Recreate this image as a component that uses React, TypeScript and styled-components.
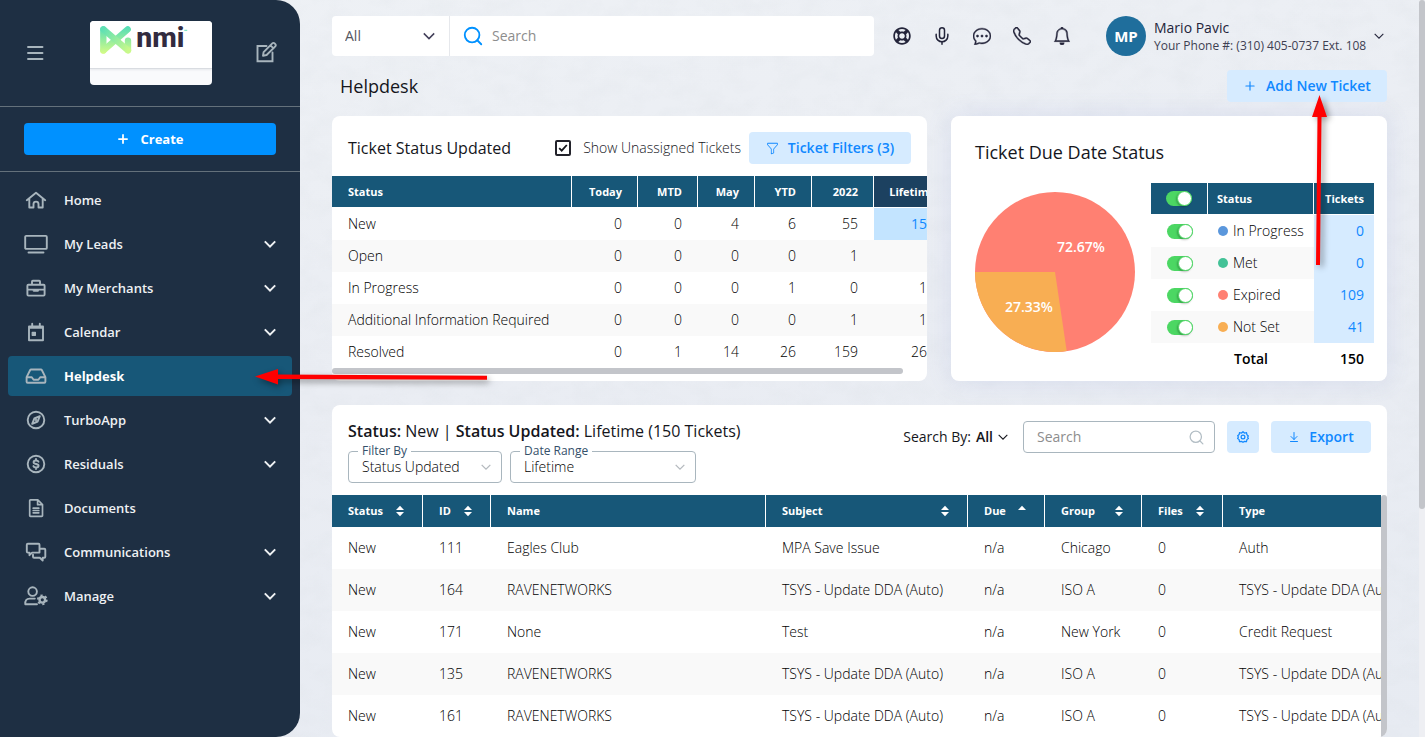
import React from "react";
import styled, { createGlobalStyle, css } from "styled-components";
import { ArrowDownToLine, Mic, Plus, Search } from "lucide-react";
import { BsBell, BsChatDots, BsFunnel, BsTelephone } from "react-icons/bs";
import { FaRegLifeRing } from "react-icons/fa";

const color = {
  navy: "#1e2f43",
  teal: "#175778",
  blue: "#0091ff",
  link: "#1088ff",
  pale: "#d6ebff",
  text: "#15161c",
  line: "#a9b6be",
  stripe: "#f9f9f9",
};

const GlobalStyle = createGlobalStyle`
  *, *::before, *::after { box-sizing: border-box; }
  body { margin: 0; background: #eaedf3; color: ${color.text}; font-family: "Open Sans", "Noto Sans", sans-serif; font-size: 14px; line-height: 20px; }
  button, input, select { font: inherit; color: inherit; margin: 0; }
  button { cursor: pointer; border: 0; padding: 0; background: none; }
  a { color: inherit; text-decoration: none; }
  h1, h2, p { margin: 0; font-weight: 400; }
  svg { display: block; flex: none; }
`;

/* ---------- shell ---------- */

const Page = styled.div`
  position: relative;
  display: flex;
  height: 100vh;
  overflow: hidden;
  isolation: isolate;
  background: linear-gradient(170deg, #eef1f5 0%, #eaedf3 45%, #e7ebf2 100%);
`;

const Texture = styled.svg`
  position: absolute;
  inset: 0;
  z-index: -1;
  width: 100%;
  height: 100%;
`;

const Content = styled.main`
  flex: 1;
  min-width: 0;
  padding: 16px 32px 0;
  overflow-y: auto;
  scrollbar-width: none;
`;

const PageRail = styled.div`
  flex: none;
  width: 6px;
  background: #eeeff3;
  &::before {
    content: "";
    display: block;
    height: 69%;
    border-radius: 3px;
    background: #c3c5ca;
  }
`;

/* ---------- sidebar ---------- */

const Sidebar = styled.aside`
  position: relative;
  z-index: 2;
  flex: none;
  width: 300px;
  border-radius: 0 24px 24px 0;
  background: ${color.navy};
  color: #fff;
`;

const Brand = styled.header`
  display: flex;
  align-items: center;
  justify-content: space-between;
  height: 107px;
  padding: 0 22px 0 24px;
  border-bottom: 1px solid #64717b;
`;

const BrandCard = styled.div`
  width: 122px;
  height: 64px;
  overflow: hidden;
  border-radius: 4px;
  background: #f9fafc;
`;

const BrandMark = styled.svg`
  background: #fff;
  border-bottom: 1px solid #d9dce1;
  box-shadow: 0 1px 2px #e6e8ec;
`;

const CreateBar = styled.div`
  padding: 16px 24px;
  border-bottom: 1px solid #64717b;
`;

const CreateButton = styled.button`
  display: flex;
  align-items: center;
  justify-content: center;
  gap: 10px;
  width: 100%;
  height: 32px;
  border-radius: 4px;
  background: ${color.blue};
  color: #fff;
  font-size: 13px;
  font-weight: 700;
`;

const Nav = styled.nav`
  display: flex;
  flex-direction: column;
  gap: 4px;
  padding: 8px;
`;

const NavItem = styled.a<{ $active?: boolean }>`
  position: relative;
  display: flex;
  align-items: center;
  gap: 16px;
  height: 40px;
  padding: 0 16px;
  border-radius: 4px;
  background: ${(p) => (p.$active ? color.teal : "transparent")};
  color: ${(p) => (p.$active ? "#fff" : "#eef1f3")};
  font-size: 13px;
  font-weight: ${(p) => (p.$active ? 700 : 600)};
`;

const NavLabel = styled.span`
  flex: 1;
`;

const StrokeIcon = styled.svg`
  width: 24px;
  height: 24px;
  fill: none;
  stroke: #a8b5bd;
  stroke-width: 1.9;
  stroke-linejoin: round;
  stroke-linecap: round;
`;

const Chevron = ({ size = 12, width = 2 }: { size?: number; width?: number }) => (
  <svg width={size} height={size} viewBox="0 0 12 12" fill="none" stroke="currentColor" strokeWidth={width}>
    <path d="M.8 3.4 6 8.6l5.2-5.2" />
  </svg>
);

/* ---------- arrows ---------- */

const ArrowLeft = styled.svg`
  position: absolute;
  z-index: 5;
  left: 247px;
  top: 12px;
  filter: drop-shadow(2px 3px 3px rgba(0, 0, 0, 0.4));
  pointer-events: none;
`;

const ArrowUp = styled.svg`
  position: absolute;
  z-index: 5;
  left: 84px;
  top: 25px;
  filter: drop-shadow(3px 2px 3px rgba(0, 0, 0, 0.4));
  pointer-events: none;
`;

/* ---------- top bar ---------- */

const TopBar = styled.div`
  display: grid;
  grid-template-columns: minmax(0, 1fr) auto 281px;
  align-items: center;
  height: 40px;
  color: #23243a;
`;

const GlobalSearch = styled.div`
  display: flex;
  height: 40px;
  overflow: hidden;
  border-radius: 4px;
  background: #fff;
`;

const Scope = styled.div`
  position: relative;
  flex: none;
  width: 118px;
  border-right: 1px solid #e6e8ec;
  color: #55555e;
`;

const PlainSelect = styled.select`
  appearance: none;
  width: 100%;
  height: 100%;
  padding: 0 32px 0 13px;
  border: 0;
  outline: 0;
  border-radius: inherit;
  background: transparent;
`;

const SelectMark = styled.span<{ $tone: string; $right: number }>`
  position: absolute;
  right: ${(p) => p.$right}px;
  top: 50%;
  transform: translateY(-50%);
  color: ${(p) => p.$tone};
  pointer-events: none;
`;

const SearchLabel = styled.label`
  display: flex;
  flex: 1;
  align-items: center;
  gap: 8px;
  padding: 0 12px;
  color: ${color.blue};
`;

const SearchInput = styled.input`
  flex: 1;
  min-width: 0;
  padding: 0;
  border: 0;
  outline: 0;
  background: transparent;
  color: ${color.text};
  &::placeholder { color: #8d8d8d; opacity: 1; }
`;

const Tools = styled.div`
  display: flex;
  padding: 0 24px 0 8px;
`;

const ToolButton = styled.button`
  display: grid;
  place-items: center;
  width: 40px;
  height: 40px;
`;

const User = styled.button`
  display: flex;
  align-items: center;
  gap: 8px;
  padding-right: 3px;
  text-align: left;
`;

const Avatar = styled.span`
  display: grid;
  place-items: center;
  flex: none;
  width: 40px;
  height: 40px;
  border-radius: 50%;
  background: #1f6e9c;
  color: #fff;
  font-size: 15px;
  font-weight: 700;
`;

const UserText = styled.span`
  display: grid;
  flex: 1;
  padding-top: 2px;
  white-space: nowrap;
  line-height: 18px;
`;

const Phone = styled.small`
  color: #3e3f52;
  font-size: 12px;
`;

/* ---------- shared controls ---------- */

const PaleButton = styled.button<{ $width: number }>`
  position: relative;
  display: flex;
  flex: none;
  align-items: center;
  justify-content: center;
  gap: 9px;
  width: ${(p) => p.$width}px;
  height: 32px;
  border-radius: 4px;
  background: ${color.pale};
  color: ${color.link};
  font-weight: 600;
  white-space: nowrap;
`;

const TitleRow = styled.div`
  position: relative;
  z-index: 1;
  display: flex;
  align-items: center;
  justify-content: space-between;
  margin: 14px 0;
  padding-left: 8px;
`;

const PageTitle = styled.h1`
  font-size: 18px;
  line-height: 24px;
`;

const Card = styled.section`
  min-width: 0;
  overflow: hidden;
  border-radius: 8px;
  background: #fff;
`;

const DueCard = styled(Card)`
  padding: 24px 13px 6px 24px;
  box-shadow: 0 0 24px rgba(120, 135, 210, 0.16);
`;

const CardGrid = styled.div`
  display: grid;
  grid-template-columns: minmax(0, 1fr) 436px;
  gap: 24px;
  margin-bottom: 24px;
`;

const CardTitle = styled.h2<{ $size: number }>`
  font-size: ${(p) => p.$size}px;
  line-height: 24px;
`;

const StatusHeader = styled.div`
  display: flex;
  align-items: center;
  gap: 8px;
  height: 60px;
  padding: 4px 16px 0;
`;

const CheckLabel = styled.label`
  display: flex;
  align-items: center;
  gap: 12px;
  margin-left: auto;
  white-space: nowrap;
  font-weight: 300;
`;

const CheckFace = styled.span`
  display: grid;
  place-items: center;
  > * { grid-area: 1 / 1; }
  > svg { pointer-events: none; }
`;

const CheckBox = styled.input`
  appearance: none;
  width: 16px;
  height: 16px;
  border: 2px solid #23232b;
  border-radius: 2px;
`;

const Toggle = styled.input`
  appearance: none;
  display: block;
  width: 26px;
  height: 15px;
  margin: 0 auto;
  border-radius: 8px;
  background: #4cd763;
  &::before {
    content: "";
    display: block;
    width: 15px;
    height: 15px;
    margin-left: 11px;
    border: 1px solid #4cd763;
    border-radius: 50%;
    background: #fff;
    box-shadow: -1px 1px 2px rgba(0, 0, 0, 0.25);
  }
`;

/* ---------- tables ---------- */

const Clip = styled.div`
  flex: 1;
  min-width: 0;
  overflow: hidden;
`;

const Table = styled.table<{ $min: number }>`
  width: 100%;
  min-width: ${(p) => p.$min}px;
  table-layout: fixed;
  border-collapse: separate;
  border-spacing: 0;
  text-align: left;
`;

const Col = styled.col<{ $width?: number }>`
  ${(p) => p.$width && css`width: ${p.$width}px;`}
`;

const Th = styled.th<{ $end?: boolean; $dark?: boolean; $pad?: number; $last?: boolean }>`
  height: 32px;
  padding: 0 ${(p) => p.$pad ?? 16}px;
  border-right: ${(p) => (p.$last ? 0 : 1)}px solid #fff;
  background: ${(p) => (p.$dark ? "#1c4160" : color.teal)};
  background-clip: padding-box;
  color: #fff;
  font-size: 11px;
  font-weight: 700;
  text-align: ${(p) => (p.$end ? "right" : "left")};
  white-space: nowrap;
`;

const RuledTh = styled(Th)`
  border-bottom: 1px solid #fff;
`;

const Td = styled.td<{ $end?: boolean; $fill?: string; $pad?: number; $tall?: boolean }>`
  height: ${(p) => (p.$tall ? 42 : 32)}px;
  padding: 0 ${(p) => p.$pad ?? 16}px;
  background: ${(p) => p.$fill ?? "transparent"};
  color: ${(p) => (p.$fill ? color.link : "#000")};
  font-weight: ${(p) => (p.$fill ? 400 : 300)};
  text-align: ${(p) => (p.$end ? "right" : "left")};
  white-space: nowrap;
`;

const Row = styled.tr`
  &:nth-child(even) { background: ${color.stripe}; }
`;

const TotalCell = styled(Td)`
  font-weight: 600;
`;

const Indent = styled.span`
  margin-left: 16px;
`;

const Dot = styled.i<{ $color: string }>`
  display: inline-block;
  width: 10px;
  height: 10px;
  margin-right: 5px;
  border-radius: 50%;
  background: ${(p) => p.$color};
`;

const BottomRail = styled.div`
  height: 6px;
  margin-bottom: 7px;
  &::before {
    content: "";
    display: block;
    width: 96%;
    height: 6px;
    border-radius: 3px;
    background: #c3c5ca;
  }
`;

const SideRail = styled.div`
  flex: none;
  width: 6px;
  border-radius: 3px 3px 0 0;
  background: #c3c5ca;
`;

const DueBody = styled.div`
  display: grid;
  grid-template-columns: 160px 1fr;
  gap: 16px;
  margin-top: 19px;
`;

const Pie = styled.svg`
  margin-top: 9px;
  font-size: 14px;
  font-weight: 600;
`;

const ListHeader = styled.div`
  display: flex;
  justify-content: space-between;
  align-items: flex-start;
  height: 90px;
  padding: 14px 16px 12px;
`;

const ListHeading = styled.div`
  display: grid;
  gap: 8px;
`;

const Filters = styled.div`
  display: flex;
  gap: 8px;
`;

const Field = styled.div<{ $width: number }>`
  position: relative;
  width: ${(p) => p.$width}px;
  height: 32px;
  border: 1px solid ${color.line};
  border-radius: 4px;
  font-weight: 300;
  color: #000;
`;

const FieldLabel = styled.label`
  position: absolute;
  z-index: 1;
  left: 9px;
  top: -8px;
  padding: 0 4px;
  background: #fff;
  color: #35506a;
  font-size: 12px;
  font-weight: 500;
  line-height: 14px;
`;

const ListTools = styled.div`
  display: flex;
  align-items: center;
  gap: 12px;
  padding-top: 2px;
`;

const SearchBy = styled.button`
  display: flex;
  align-items: center;
  gap: 5px;
  padding-right: 3px;
  white-space: nowrap;
`;

const Strong = styled.b`
  font-weight: 600;
`;

const ListSearch = styled.label`
  display: flex;
  align-items: center;
  width: 192px;
  height: 32px;
  padding: 0 9px 0 13px;
  border: 1px solid ${color.line};
  border-radius: 4px;
  color: #b3bec5;
`;

const ListBody = styled.div`
  display: flex;
`;

const HeadCell = styled.span`
  display: flex;
  align-items: center;
  justify-content: space-between;
`;

const SortButton = styled.button`
  height: 12px;
  padding: 0 2px;
`;

/* ---------- icons ---------- */

const navIcons: Record<string, React.ReactNode> = {
  Home: <path d="M2.8 12.2 12 4.800l9.200 7.400M5.300 10.800v8.700h4.200v-3.400a2.500 2.500 0 0 1 5 0v3.400h4.200v-8.700" />,
  "My Leads": <path d="M2.200 3.900h19.600a1 1 0 0 1 1 1v11a1 1 0 0 1-1 1H2.200a1 1 0 0 1-1-1v-11a1 1 0 0 1 1-1ZM4.500 20.500h15" />,
  "My Merchants": (
    <>
      <path d="M4.400 8.800h15.200a1 1 0 0 1 1 1v8.800a1 1 0 0 1-1 1H4.400a1 1 0 0 1-1-1V9.800a1 1 0 0 1 1-1ZM8 8.800V5.500a.8.8 0 0 1 .8-.8h6.400a.8.8 0 0 1 .8.8v3.300M3.400 13.600h17.200" />
      <path d="M9.600 13.600h4.800v1.600H9.600z" fill="#a8b5bd" strokeWidth="1" />
    </>
  ),
  Calendar: (
    <>
      <path d="M5 6.400h14v13.800H5zM5 7.800h14M8.200 3.800v3M15.800 3.800v3" />
      <path d="M8.200 12.300h3.200v3H8.200z" fill="#a8b5bd" strokeWidth="1.200" />
    </>
  ),
  Helpdesk: <path d="M2.600 13.200 6.200 6a1 1 0 0 1 .9-.5h9.800a1 1 0 0 1 .9.500l3.600 7.200v4.600a1 1 0 0 1-1 1H3.600a1 1 0 0 1-1-1v-4.600Zm.4 0h4.800l1.800 2.500h4.800l1.800-2.500H21" />,
  TurboApp: (
    <>
      <circle cx="12" cy="12" r="8.300" />
      <path d="m15.800 8.200-2.100 5.300-5.500 2.300 2.100-5.300 5.500-2.300Z" />
      <circle cx="12" cy="12" r=".5" />
    </>
  ),
  Residuals: (
    <>
      <circle cx="12" cy="12" r="8.300" />
      <path d="M14.500 9.700c-.6-1.700-4.900-1.700-4.900.5 0 2.400 5 1.200 5 3.600 0 2.200-4.500 2.200-5.200.3M12 7v1.300M12 15.700V17" />
    </>
  ),
  Documents: <path d="M5.700 4.600a.8.8 0 0 1 .8-.8h7.300l4.700 4.700v11a.8.8 0 0 1-.8.800H6.500a.8.8 0 0 1-.8-.8v-14.900ZM13.600 4v4.700h4.700M9.200 12.200h5.600M9.200 14.500h5.600M9.200 16.800h5.600" strokeWidth="1.700" />,
  Communications: <path d="M15.500 12.600V4.800a1 1 0 0 0-1-1H3.800a1 1 0 0 0-1 1v6.800a1 1 0 0 0 1 1h1.700v2.600l2.600-2.600h7.400ZM15.700 8.800h4.600a1 1 0 0 1 1 1v7a1 1 0 0 1-1 1h-1.600v2.700l-2.900-2.700H10a1 1 0 0 1-1-1v-2" />,
  Manage: (
    <>
      <circle cx="8.600" cy="7.600" r="4.300" />
      <path d="M13 20.200H1.300c-.3-3.700 1.200-5.600 4.300-5.600h5.200" />
      <circle cx="18.300" cy="15.800" r="2.800" strokeWidth="2.400" />
      <circle cx="18.300" cy="15.800" r="4.500" strokeWidth="1.800" strokeDasharray="2.200 2.500" strokeLinecap="butt" />
    </>
  ),
};

const SortMark = ({ up }: { up?: boolean }) => (
  <svg width="8" height="12" viewBox="0 0 8 12" fill="#fff">
    <path d="M4 .8 8 5H0z" />
    {!up && <path d="M4 11.200 0 7h8z" />}
  </svg>
);

const GearMark = () => (
  <svg width="12" height="12" viewBox="0 0 12 12" fill="none" stroke="currentColor" strokeWidth="1.200">
    <path d="M6 .7 7.500 2l2-.3.400 2 1.500 1.300L10.600 6l.8 1.500-1.500 1.100-.4 1.900-2-.2L6 11.300l-1.500-1-2 .2-.4-1.900L.6 7.500 1.400 6 .6 4.700l1.500-1.100.4-1.900 2 .3L6 .7Z" />
    <circle cx="6" cy="6" r="1.900" />
  </svg>
);

/* ---------- data ---------- */

const nav: { name: string; menu?: boolean; active?: boolean }[] = [
  { name: "Home" },
  { name: "My Leads", menu: true },
  { name: "My Merchants", menu: true },
  { name: "Calendar", menu: true },
  { name: "Helpdesk", active: true },
  { name: "TurboApp", menu: true },
  { name: "Residuals", menu: true },
  { name: "Documents" },
  { name: "Communications", menu: true },
  { name: "Manage", menu: true },
];

const periods = ["Today", "MTD", "May", "YTD", "2022", "Lifetime"];
const periodWidths = [66, 60, 57, 57, 62, 77];
const statusRows: [string, number[]][] = [
  ["New", [0, 0, 4, 6, 55, 150]],
  ["Open", [0, 0, 0, 0, 1, 1]],
  ["In Progress", [0, 0, 0, 1, 0, 10]],
  ["Additional Information Required", [0, 0, 0, 0, 1, 10]],
  ["Resolved", [0, 1, 14, 26, 159, 260]],
];

const dueRows: [string, string, number][] = [
  ["In Progress", "#5b97dc", 0],
  ["Met", "#43c297", 0],
  ["Expired", "#ff8072", 109],
  ["Not Set", "#f8ae53", 41],
];

const ticketCols: { name: string; width?: number; sort?: "both" | "up" }[] = [
  { name: "Status", width: 91, sort: "both" },
  { name: "ID", width: 68, sort: "both" },
  { name: "Name", width: 275 },
  { name: "Subject", width: 202, sort: "both" },
  { name: "Due", width: 77, sort: "up" },
  { name: "Group", width: 97, sort: "both" },
  { name: "Files", width: 81, sort: "both" },
  { name: "Type" },
];

const tickets = [
  ["New", "111", "Eagles Club", "MPA Save Issue", "n/a", "Chicago", "0", "Auth"],
  ["New", "164", "RAVENETWORKS", "TSYS - Update DDA (Auto)", "n/a", "ISO A", "0", "TSYS - Update DDA (Auto)"],
  ["New", "171", "None", "Test", "n/a", "New York", "0", "Credit Request"],
  ["New", "135", "RAVENETWORKS", "TSYS - Update DDA (Auto)", "n/a", "ISO A", "0", "TSYS - Update DDA (Auto)"],
  ["New", "161", "RAVENETWORKS", "TSYS - Update DDA (Auto)", "n/a", "ISO A", "0", "TSYS - Update DDA (Auto)"],
];

/* ---------- sections ---------- */

const SideMenu = () => (
  <Sidebar>
    <Brand>
      <button aria-label="Toggle menu">
        <StrokeIcon viewBox="0 0 24 24"><path d="M4 6h14.500M4 12h14.500M4 18h14.500" /></StrokeIcon>
      </button>
      <BrandCard>
        <BrandMark width="122" height="48" viewBox="0 0 122 48" role="img" aria-label="nmi">
          <defs>
            <linearGradient id="leaf" x1="0" y1="5" x2="0" y2="33" gradientUnits="userSpaceOnUse">
              <stop offset="0" stopColor="#4fdcb8" />
              <stop offset="1" stopColor="#d3fb87" />
            </linearGradient>
            <linearGradient id="sweep" x1="12" y1="8" x2="38" y2="30" gradientUnits="userSpaceOnUse">
              <stop offset="0" stopColor="#5fe0b4" />
              <stop offset="1" stopColor="#c9f98a" />
            </linearGradient>
          </defs>
          <g fill="none" strokeWidth="6.500" strokeLinecap="round">
            <path d="M12.300 8.500V30M37.500 20v9.500" stroke="url(#leaf)" />
            <path d="M37.200 8.500 12.500 30" stroke="url(#leaf)" />
            <path d="m12.500 8.500 25 21.500" stroke="url(#sweep)" />
          </g>
          <text x="46" y="27" fontFamily="Roboto" fontWeight="800" fontSize="29" fill="#322b3f">nmi</text>
          <path d="M95 9.500h3" stroke="#5fe0b4" />
        </BrandMark>
      </BrandCard>
      <button aria-label="Edit menu">
        <StrokeIcon viewBox="0 0 24 24">
          <path d="M12.500 5H3.500v15.200h15V11.500" strokeLinejoin="miter" />
          <path d="m9 14.800.6-3.700 8.700-8.700a1.600 1.600 0 0 1 2.300 0l.7.700a1.600 1.600 0 0 1 0 2.300L12.600 14 9 14.800ZM16.500 4.300l3 3" />
        </StrokeIcon>
      </button>
    </Brand>
    <CreateBar>
      <CreateButton><Plus size={14} strokeWidth={3} />Create</CreateButton>
    </CreateBar>
    <Nav>
      {nav.map((item) => (
        <NavItem key={item.name} href="#" $active={item.active}>
          <StrokeIcon viewBox="0 0 24 24">{navIcons[item.name]}</StrokeIcon>
          <NavLabel>{item.name}</NavLabel>
          {item.menu && <Chevron />}
          {item.active && (
            <ArrowLeft width="234" height="18" viewBox="0 0 234 18" fill="red">
              <path d="M0 8.500 23 1v5.500l209 1.200v4L23 11v5.500z" />
            </ArrowLeft>
          )}
        </NavItem>
      ))}
    </Nav>
  </Sidebar>
);

const Header = () => (
  <TopBar>
    <GlobalSearch>
      <Scope>
        <PlainSelect aria-label="Search scope" defaultValue="All"><option>All</option></PlainSelect>
        <SelectMark $tone="#44405a" $right={14}><Chevron width={1.5} /></SelectMark>
      </Scope>
      <SearchLabel>
        <Search size={22} strokeWidth={2} />
        <SearchInput type="search" placeholder="Search" aria-label="Search" />
      </SearchLabel>
    </GlobalSearch>
    <Tools>
      <ToolButton aria-label="Support"><FaRegLifeRing size={18} /></ToolButton>
      <ToolButton aria-label="Voice"><Mic size={20} strokeWidth={1.8} /></ToolButton>
      <ToolButton aria-label="Chat"><BsChatDots size={18} strokeWidth={0.4} /></ToolButton>
      <ToolButton aria-label="Calls"><BsTelephone size={18} strokeWidth={0.4} /></ToolButton>
      <ToolButton aria-label="Notifications"><BsBell size={18} strokeWidth={0.4} /></ToolButton>
    </Tools>
    <User>
      <Avatar>MP</Avatar>
      <UserText>
        Mario Pavic
        <Phone>Your Phone #: (310) 405-0737 Ext. 108</Phone>
      </UserText>
      <Chevron size={10} width={1.3} />
    </User>
  </TopBar>
);

const StatusCard = () => (
  <Card>
    <StatusHeader>
      <CardTitle $size={16}>Ticket Status Updated</CardTitle>
      <CheckLabel>
        <CheckFace>
          <CheckBox type="checkbox" defaultChecked />
          <svg width="10" height="10" viewBox="0 0 10 10" fill="none" stroke="#15161c" strokeWidth="1.800">
            <path d="m1.200 5.200 2.500 2.500L8.800 2" />
          </svg>
        </CheckFace>
        Show Unassigned Tickets
      </CheckLabel>
      <PaleButton $width={162}><BsFunnel size={13} />Ticket Filters (3)</PaleButton>
    </StatusHeader>
    <Clip>
      <Table $min={619}>
        <colgroup>
          <Col />
          {periodWidths.map((w, i) => <Col key={i} $width={w} />)}
        </colgroup>
        <thead>
          <tr>
            <RuledTh>Status</RuledTh>
            {periods.map((p) => <RuledTh key={p} $end $pad={15} $dark={p === "Lifetime"}>{p}</RuledTh>)}
          </tr>
        </thead>
        <tbody>
          {statusRows.map(([name, values], r) => (
            <Row key={name}>
              <Td>{name}</Td>
              {values.map((v, i) => (
                <Td key={i} $end $fill={r === 0 && i === 5 ? "#c3e4ff" : undefined}>{v}</Td>
              ))}
            </Row>
          ))}
        </tbody>
      </Table>
    </Clip>
    <BottomRail />
  </Card>
);

const DueStatusCard = () => (
  <DueCard>
    <CardTitle $size={18}>Ticket Due Date Status</CardTitle>
    <DueBody>
      <Pie width="160" height="160" viewBox="0 0 160 160" fill="#fff" textAnchor="middle">
        <circle cx="80" cy="80" r="80" fill="#ff8072" />
        <path d="M80 80 91.700 159.100A80 80 0 0 1 0 80Z" fill="#f8ae53" />
        <text x="106" y="60">72.67%</text>
        <text x="54" y="120">27.33%</text>
      </Pie>
      <Table $min={223}>
        <colgroup><Col $width={57} /><Col /><Col $width={60} /></colgroup>
        <thead>
          <tr>
            <RuledTh $pad={10}><Toggle type="checkbox" role="switch" defaultChecked aria-label="All statuses" /></RuledTh>
            <RuledTh $pad={9}>Status</RuledTh>
            <RuledTh $pad={10} $end $last>Tickets</RuledTh>
          </tr>
        </thead>
        <tbody>
          {dueRows.map(([name, dot, count]) => (
            <Row key={name}>
              <Td $pad={10}><Toggle type="checkbox" role="switch" defaultChecked aria-label={name} /></Td>
              <Td $pad={10}><Dot $color={dot} />{name}</Td>
              <Td $pad={10} $end $fill={color.pale}>{count}</Td>
            </Row>
          ))}
        </tbody>
        <tfoot>
          <tr>
            <Td />
            <TotalCell $pad={10}><Indent>Total</Indent></TotalCell>
            <TotalCell $pad={10} $end>150</TotalCell>
          </tr>
        </tfoot>
      </Table>
    </DueBody>
  </DueCard>
);

const FilterField = ({ id, label, value, width }: { id: string; label: string; value: string; width: number }) => (
  <Field $width={width}>
    <FieldLabel htmlFor={id}>{label}</FieldLabel>
    <PlainSelect id={id} defaultValue={value}><option>{value}</option></PlainSelect>
    <SelectMark $tone="#b4b9be" $right={10}><Chevron size={10} width={1.5} /></SelectMark>
  </Field>
);

const TicketList = () => (
  <Card>
    <ListHeader>
      <ListHeading>
        <CardTitle $size={16}>
          <Strong>Status:</Strong> New | <Strong>Status Updated:</Strong> Lifetime (150 Tickets)
        </CardTitle>
        <Filters>
          <FilterField id="filter-by" label="Filter By" value="Status Updated" width={154} />
          <FilterField id="date-range" label="Date Range" value="Lifetime" width={186} />
        </Filters>
      </ListHeading>
      <ListTools>
        <SearchBy>Search By: <Strong>All</Strong><Chevron size={10} width={1.3} /></SearchBy>
        <ListSearch>
          <SearchInput type="search" placeholder="Search" aria-label="Search tickets" />
          <Search size={17} strokeWidth={1.8} />
        </ListSearch>
        <PaleButton $width={32} aria-label="Settings"><GearMark /></PaleButton>
        <PaleButton $width={100}><ArrowDownToLine size={12} />Export</PaleButton>
      </ListTools>
    </ListHeader>
    <ListBody>
      <Clip>
        <Table $min={1091}>
          <colgroup>{ticketCols.map((c) => <Col key={c.name} $width={c.width} />)}</colgroup>
          <thead>
            <tr>
              {ticketCols.map((c) => (
                <Th key={c.name}>
                  <HeadCell>
                    {c.name}
                    {c.sort && <SortButton aria-label={`Sort by ${c.name}`}><SortMark up={c.sort === "up"} /></SortButton>}
                  </HeadCell>
                </Th>
              ))}
            </tr>
          </thead>
          <tbody>
            {tickets.map((t) => (
              <Row key={t[1]}>{t.map((v, i) => <Td key={i} $tall>{v}</Td>)}</Row>
            ))}
          </tbody>
        </Table>
      </Clip>
      <SideRail />
    </ListBody>
  </Card>
);

export default function App() {
  return (
    <Page>
      <GlobalStyle />
      <Texture aria-hidden="true">
        <filter id="grain">
          <feTurbulence type="fractalNoise" baseFrequency="0.04 0.06" numOctaves="5" seed="8" />
          <feColorMatrix values="0 0 0 0 .62  0 0 0 0 .66  0 0 0 0 .7  .5 0 0 0 -.2" />
        </filter>
        <rect width="100%" height="100%" filter="url(#grain)" opacity=".5" />
      </Texture>
      <SideMenu />
      <Content>
        <Header />
        <TitleRow>
          <PageTitle>Helpdesk</PageTitle>
          <PaleButton $width={160}>
            <Plus size={14} />Add New Ticket
            <ArrowUp width="16" height="171" viewBox="0 0 16 171" fill="red">
              <path d="M8.500 0 16 22h-5.500L9 170H5L6.500 22H1z" />
            </ArrowUp>
          </PaleButton>
        </TitleRow>
        <CardGrid>
          <StatusCard />
          <DueStatusCard />
        </CardGrid>
        <TicketList />
      </Content>
      <PageRail />
    </Page>
  );
}
